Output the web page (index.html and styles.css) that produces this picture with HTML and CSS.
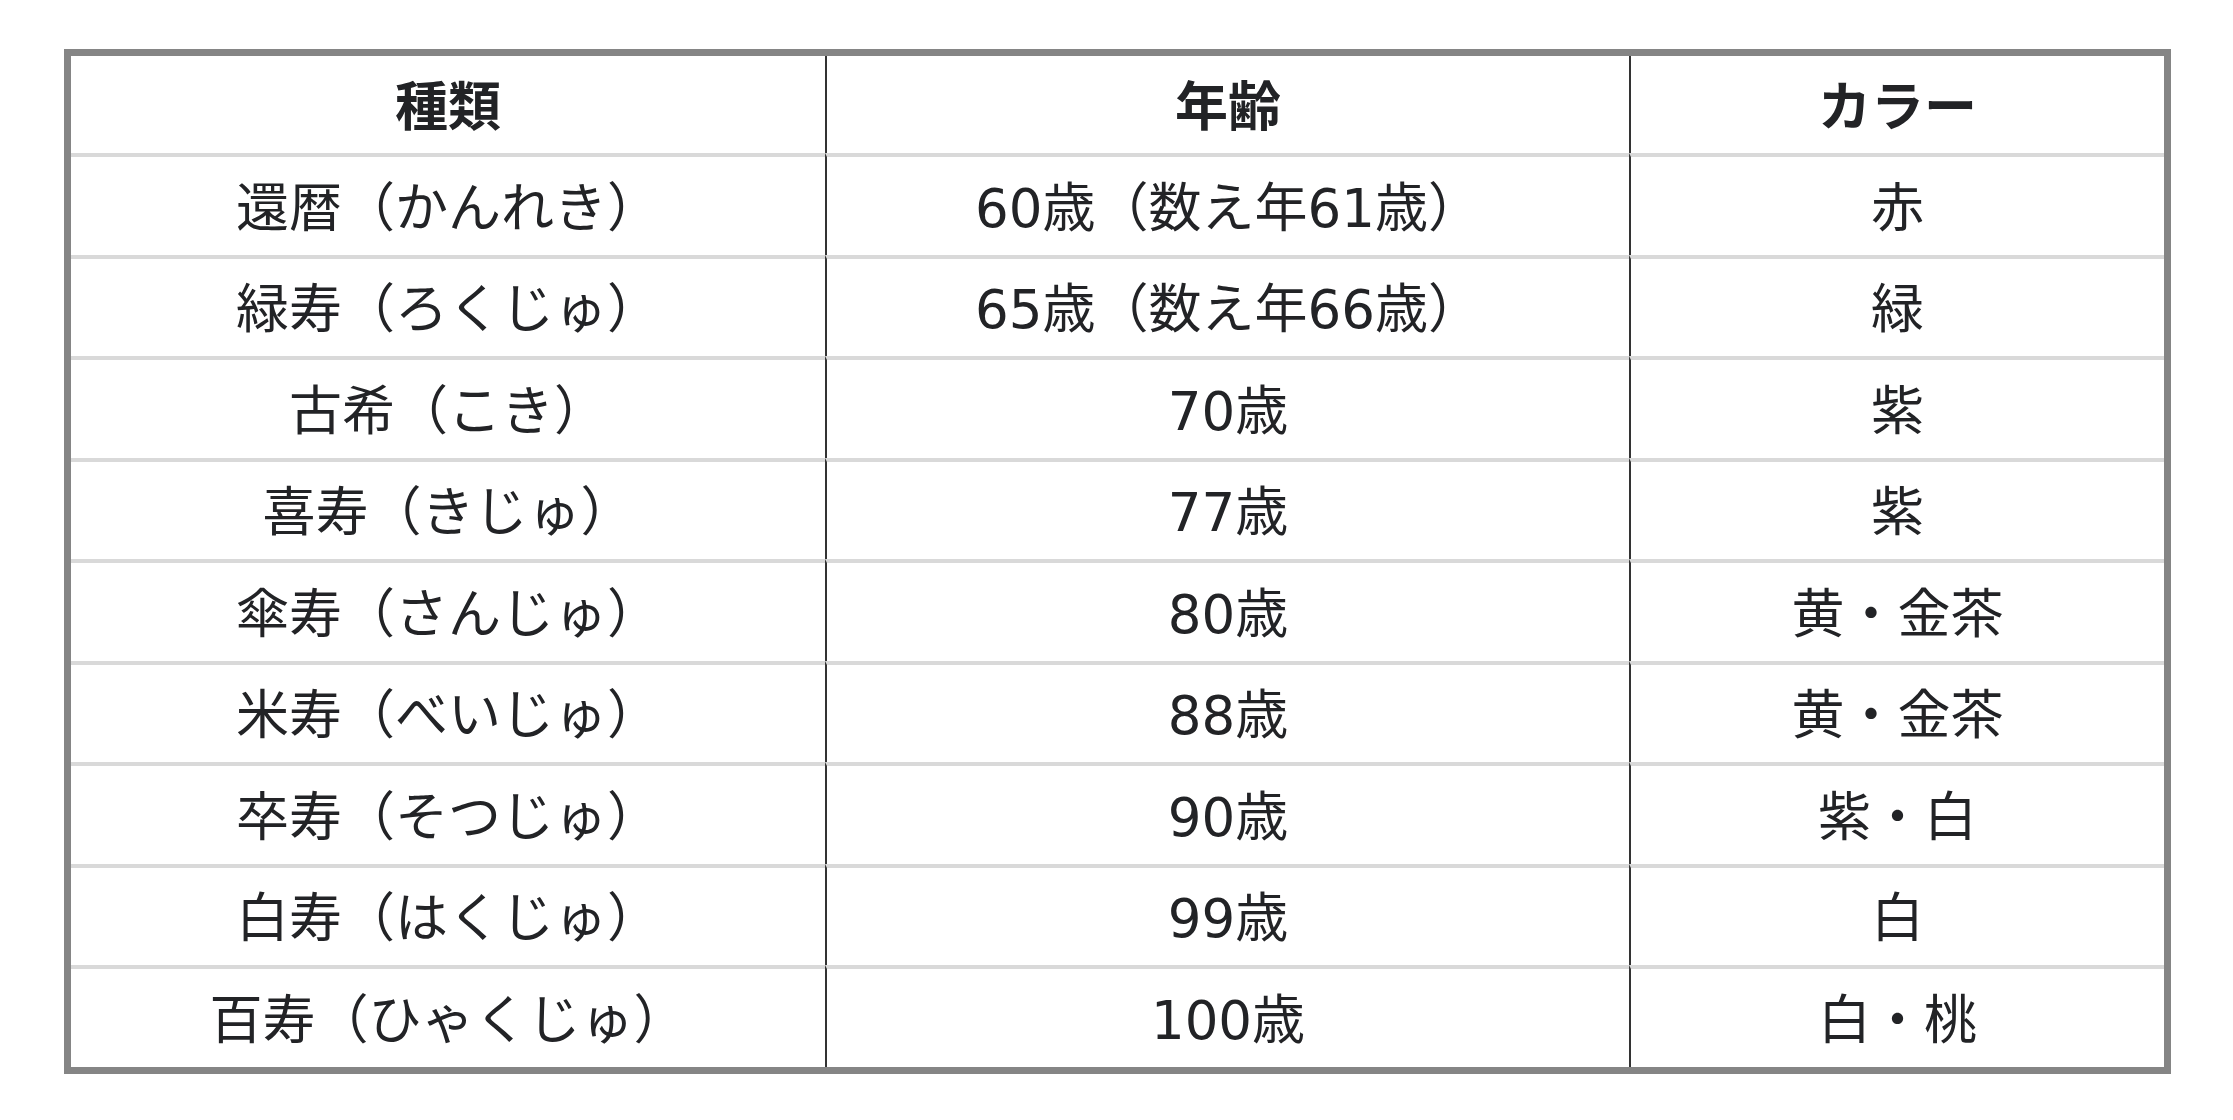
FILE: index.html
```html
<!DOCTYPE html>
<html lang="ja">
<head>
<meta charset="utf-8">
<title>長寿祝い</title>
<link rel="stylesheet" href="styles.css">
</head>
<body>
<table class="age-table">
  <colgroup>
    <col class="col-kind">
    <col class="col-age">
    <col class="col-color">
  </colgroup>
  <thead>
    <tr><th>種類</th><th>年齢</th><th>カラー</th></tr>
  </thead>
  <tbody>
    <tr><td>還暦（かんれき）</td><td>60歳（数え年61歳）</td><td>赤</td></tr>
    <tr><td>緑寿（ろくじゅ）</td><td>65歳（数え年66歳）</td><td>緑</td></tr>
    <tr><td>古希（こき）</td><td>70歳</td><td>紫</td></tr>
    <tr><td>喜寿（きじゅ）</td><td>77歳</td><td>紫</td></tr>
    <tr><td>傘寿（さんじゅ）</td><td>80歳</td><td>黄・金茶</td></tr>
    <tr><td>米寿（べいじゅ）</td><td>88歳</td><td>黄・金茶</td></tr>
    <tr><td>卒寿（そつじゅ）</td><td>90歳</td><td>紫・白</td></tr>
    <tr><td>白寿（はくじゅ）</td><td>99歳</td><td>白</td></tr>
    <tr><td>百寿（ひゃくじゅ）</td><td>100歳</td><td>白・桃</td></tr>
  </tbody>
</table>
</body>
</html>
```

FILE: styles.css
```css
html, body {
  margin: 0;
  background: #ffffff;
}

body {
  padding: 49px 0 0 64px;
  font-family: "DejaVu Sans", "Noto Sans CJK JP", sans-serif;
  color: #222326;
}

.age-table {
  table-layout: fixed;
  border-collapse: separate;
  border-spacing: 0;
  width: 2107px;
  border: 7px solid #858585;
}

.col-kind { width: 754px; }
.col-age { width: 804px; }
.col-color { width: 535px; }

.age-table th,
.age-table td {
  padding: 6px 0 0;
  text-align: center;
  vertical-align: middle;
  font-size: 53px;
  line-height: 1.2;
  white-space: nowrap;
}

.age-table th {
  height: 91px;
  font-weight: 700;
}

.age-table td {
  height: 91.5px;
  font-weight: 400;
  border-top: 4px solid #d9d9d9;
}

.age-table th + th,
.age-table td + td {
  border-left: 2px solid #333333;
}
```
